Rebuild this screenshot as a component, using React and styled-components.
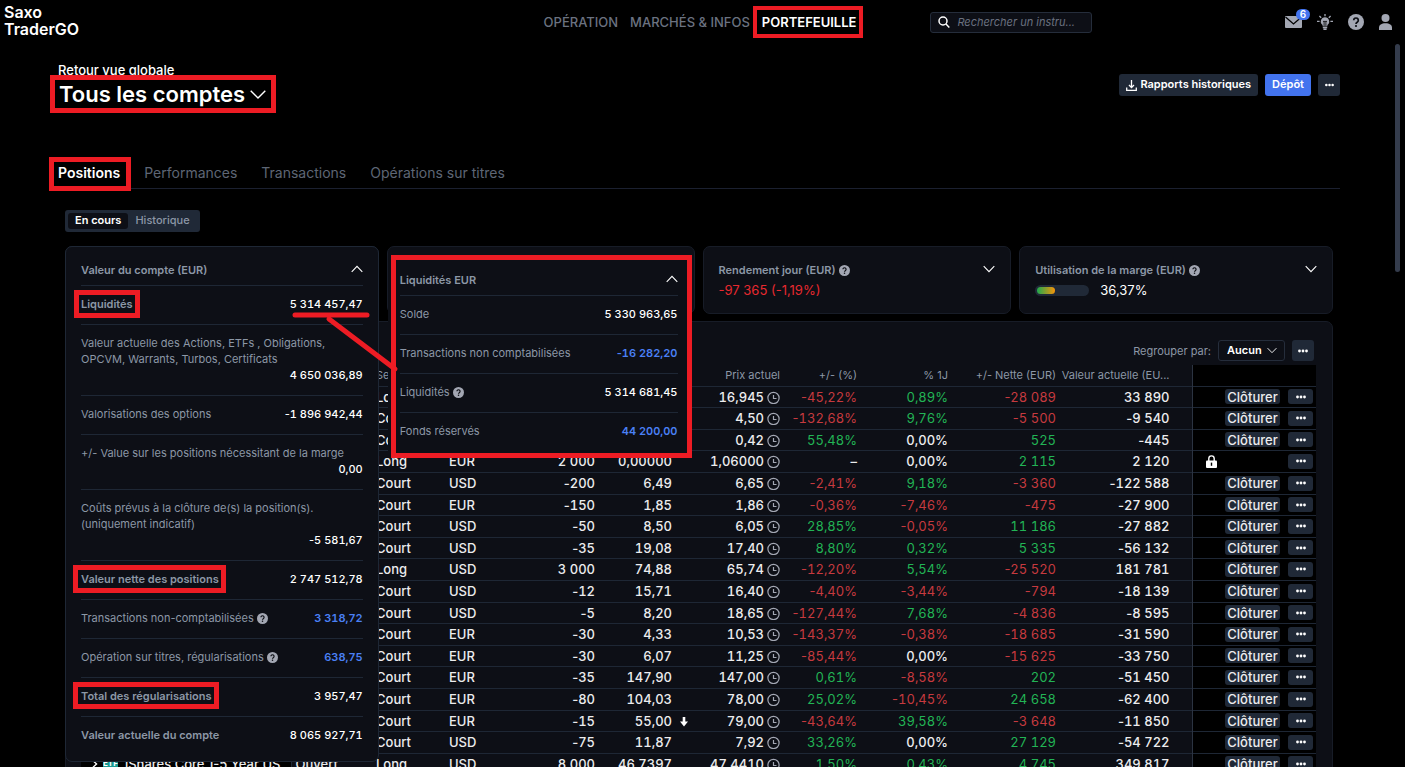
import React from "react";
import styled, { createGlobalStyle, css } from "styled-components";

const c = {
  bg: "#000000",
  card: "#0d0f16",
  line: "#1e2735",
  edge: "#171c27",
  chip: "#202937",
  text: "#ffffff",
  cell: "#ececee",
  muted: "#8c97a6",
  dim: "#5e6675",
  icon: "#a3a7b3",
  blue: "#4273ee",
  link: "#4a80f5",
  red: "#c63a3f",
  redBright: "#e8292f",
  green: "#22b455",
  mark: "#ed1c24",
};

const GlobalStyle = createGlobalStyle`
  *, *::before, *::after { box-sizing: border-box; }
  body {
    margin: 0;
    background: ${c.bg};
    color: ${c.text};
    font-family: Inter, "Liberation Sans", sans-serif;
    font-size: 12px;
    line-height: 16px;
  }
  button, input, select { font: inherit; color: inherit; }
  button { border: 0; padding: 0; background: none; cursor: pointer; }
  h1, h2, p { margin: 0; font-size: inherit; font-weight: inherit; }
  svg { display: block; flex: none; }
`;

const Page = styled.div`
  position: relative;
  height: 100vh;
  overflow: hidden;
`;

const outline = css`
  position: relative;
  &::after {
    content: "";
    position: absolute;
    inset: ${(p) => p.$inset};
    border: ${(p) => p.$thick || 5}px solid ${c.mark};
    pointer-events: none;
  }
`;

const Marked = styled.span`
  ${outline}
`;

const TopBar = styled.header`
  display: grid;
  grid-template-columns: 1fr auto 1fr;
  align-items: center;
  height: 44px;
  padding: 0 13px 0 4px;
`;

const Logo = styled.div`
  align-self: start;
  padding-top: 4px;
  font-size: 16px;
  line-height: 17px;
  font-weight: 600;
`;

const Nav = styled.nav`
  display: flex;
  gap: 12px;
  font-size: 13px;
  font-weight: 500;
  margin-left: 4px;
`;

const NavLink = styled.a`
  color: ${(p) => (p.$active ? c.text : "#6b7280")};
  font-weight: ${(p) => (p.$active ? 600 : 500)};
  text-decoration: none;
`;

const TopRight = styled.div`
  display: flex;
  justify-content: space-between;
  align-items: center;
  padding-left: 74px;
`;

const SearchBox = styled.label`
  display: flex;
  align-items: center;
  gap: 7px;
  width: 162px;
  height: 21px;
  padding: 0 7px 1px;
  border: 1px solid #252d3b;
  border-radius: 3px;
  background: ${c.card};
`;

const SearchInput = styled.input`
  flex: 1;
  min-width: 0;
  border: 0;
  padding: 0;
  outline: 0;
  background: none;
  font-size: 11px;
  font-style: italic;
  &::placeholder { color: #6b7280; opacity: 1; }
`;

const IconRow = styled.div`
  display: flex;
  align-items: center;
  gap: 15px;
  color: ${c.icon};
`;

const IconButton = styled.button`
  position: relative;
  color: inherit;
`;

const Badge = styled.span`
  position: absolute;
  left: 11px;
  top: -7px;
  width: 14px;
  height: 11px;
  border-radius: 6px;
  background: ${c.blue};
  color: #fff;
  font-size: 10px;
  font-weight: 600;
  line-height: 11px;
  text-align: center;
`;

const Main = styled.main`
  padding: 18px 65px 0 50px;
`;

const TitleRow = styled.div`
  display: flex;
  justify-content: space-between;
  align-items: flex-start;
  height: 94px;
`;

const TitleBlock = styled.div`
  padding-left: 8px;
`;

const BackLink = styled.a`
  display: block;
  font-size: 13px;
  font-weight: 500;
  color: ${c.text};
  text-decoration: none;
`;

const AccountButton = styled.button`
  ${outline}
  display: flex;
  align-items: center;
  gap: 4px;
  padding-left: 1px;
  font-size: 22px;
  line-height: 32px;
  font-weight: 600;
`;

const Actions = styled.div`
  display: flex;
  gap: 7px;
  padding-top: 12px;
`;

const Button = styled.button`
  display: flex;
  align-items: center;
  justify-content: center;
  gap: 3px;
  height: 22px;
  padding: 0 7px 2px;
  border-radius: 3px;
  background: ${(p) => (p.$primary ? c.blue : c.chip)};
  color: ${c.text};
  font-size: 11px;
  font-weight: 600;
`;

const Tabs = styled.div`
  display: flex;
  gap: 24px;
  height: 33px;
  padding-left: 8px;
  border-bottom: 1px solid #1b2030;
  font-size: 14px;
`;

const Tab = styled.button`
  align-self: flex-start;
  line-height: 34px;
  color: ${(p) => (p.$active ? c.text : c.dim)};
  font-weight: ${(p) => (p.$active ? 600 : 400)};
`;

const Content = styled.div`
  padding: 21px 7px 0 15px;
`;

const Segment = styled.div`
  display: inline-flex;
  height: 22px;
  padding: 3px;
  border-radius: 3px;
  background: ${c.chip};
`;

const SegmentButton = styled.button`
  height: 16px;
  padding: 0 7px 2px;
  border-radius: 3px;
  font-size: 11px;
  line-height: 14px;
  font-weight: ${(p) => (p.$active ? 600 : 500)};
  color: ${(p) => (p.$active ? c.text : c.muted)};
  background: ${(p) => (p.$active ? c.card : "none")};
`;

const Cards = styled.div`
  display: grid;
  grid-template-columns: 314fr 308fr 309fr 314fr;
  gap: 8px;
  margin-top: 14px;
`;

const Card = styled.section`
  position: relative;
  height: 68px;
  padding: 15px;
  border: 1px solid ${c.edge};
  border-radius: 7px;
  background: ${c.card};
`;

const CardHead = styled.div`
  display: flex;
  align-items: center;
  justify-content: space-between;
  color: ${c.muted};
  font-size: 11px;
  font-weight: 600;
`;

const CardTitle = styled.h2`
  display: flex;
  align-items: center;
  gap: 3px;
`;

const Toggle = styled.button`
  margin-top: -2px;
  color: ${c.text};
`;

const CardValue = styled.p`
  display: flex;
  align-items: center;
  gap: 11px;
  margin-top: 4px;
  font-size: 13px;
  color: ${(p) => (p.$down ? c.redBright : c.text)};
`;

const Meter = styled.span`
  width: 54px;
  height: 11px;
  padding: 2px;
  border-radius: 6px;
  background: ${c.chip};
  &::before {
    content: "";
    display: block;
    width: 18px;
    height: 7px;
    border-radius: 4px;
    background: linear-gradient(90deg, #1fa94f, #f5930a);
  }
`;

const OpenCard = styled(Card)`
  position: absolute;
  z-index: 2;
  left: -1px;
  right: -1px;
  top: -1px;
  height: auto;
  padding: 0 15px 6px;
  border-color: ${c.line};
`;

const CashBox = styled.section`
  position: absolute;
  z-index: 2;
  left: 3px;
  right: 2px;
  top: 8px;
  height: 203px;
  padding: 0 9px 0 4px;
  border: 5px solid ${c.mark};
  background: ${c.card};
  box-shadow: -3px 0 0 ${c.card};
`;

const ListHead = styled(CardHead)`
  height: ${(p) => p.$h}px;
  padding-top: ${(p) => p.$top}px;
`;

const Line = styled.div`
  display: flex;
  flex-wrap: wrap;
  justify-content: space-between;
  padding: 10px 0 12px;
  border-top: 1px solid ${c.line};
  font-size: 11px;
  color: ${c.muted};
`;

const LineLabel = styled.span`
  display: flex;
  align-items: center;
  gap: 3px;
  font-weight: ${(p) => (p.$strong ? 600 : 400)};
  width: ${(p) => (p.$full ? "100%" : "auto")};
`;

const LineValue = styled.span`
  margin-left: auto;
  font-variant-numeric: tabular-nums;
  font-weight: ${(p) => (p.$link ? 600 : 500)};
  color: ${(p) => (p.$link ? c.link : c.text)};
`;

const Callout = styled.svg`
  position: absolute;
  z-index: 3;
  left: 226px;
  top: 64px;
`;

const Panel = styled.section`
  margin-top: 7px;
  padding: 18px 16px 0 15px;
  border: 1px solid ${c.edge};
  border-radius: 7px 7px 0 0;
  background: ${c.card};
`;

const Toolbar = styled.div`
  display: flex;
  align-items: center;
  justify-content: flex-end;
  gap: 7px;
  padding-right: 2px;
  color: ${c.muted};
  font-size: 11px;
`;

const SelectWrap = styled.span`
  position: relative;
  color: ${c.text};
  svg { position: absolute; right: 8px; top: 7px; pointer-events: none; }
`;

const Select = styled.select`
  appearance: none;
  display: block;
  width: 67px;
  height: 21px;
  padding: 0 8px 1px;
  border: 1px solid #252d3b;
  border-radius: 3px;
  background: ${c.card};
  font-size: 11px;
  font-weight: 600;
`;

const MoreButton = styled(Button)`
  width: ${(p) => p.$w || 22}px;
  height: ${(p) => p.$h || 22}px;
  padding: 0;
`;

const Table = styled.table`
  width: 100%;
  margin-top: 4px;
  border-collapse: collapse;
  table-layout: fixed;
  white-space: nowrap;
`;

const Row = styled.tr`
  height: 22px;
  border-bottom: 1px solid ${c.line};
  &:nth-child(5n + 1), &:nth-child(5n + 3) { height: 21px; }
`;

const cell = css`
  padding: 0 4px;
  overflow: hidden;
  text-align: ${(p) => (p.$left ? "left" : "right")};
`;

const Th = styled.th`
  ${cell}
  height: 21px;
  font-size: 11px;
  font-weight: 400;
  color: ${c.muted};
`;

const ValueTh = styled(Th)`
  padding: 0 22px 0 0;
`;

const tones = { up: c.green, down: c.red, flat: c.cell };

const Td = styled.td`
  ${cell}
  font-size: 13px;
  font-variant-numeric: tabular-nums;
  font-weight: ${(p) => (p.$tone === "up" || p.$tone === "down" ? 400 : 500)};
  color: ${(p) => tones[p.$tone || "flat"]};
`;

const NameTd = styled(Td)`
  padding: 0 0 0 11px;
  border-right: 1px solid ${c.line};
  background: ${c.bg};
  font-variant-numeric: normal;
`;

const NameCell = styled.div`
  display: flex;
  align-items: center;
  gap: 5px;
`;

const EtfTag = styled.span`
  margin-right: 2px;
  background: #199a92;
  color: #fff;
  font-size: 8px;
  line-height: 13px;
  font-weight: 700;
`;

const Minus = styled.span`
  font-variant-numeric: normal;
`;

const ValueTd = styled(Td)`
  padding-right: 22px;
`;

const ActionTd = styled.td`
  padding: 0 3px 0 14px;
  border-left: 1px solid #2b3341;
  background: ${c.bg};
`;

const ActionTh = styled.th`
  padding: 0;
  border-left: 1px solid #2b3341;
  background: ${c.bg};
`;

const ActionCell = styled.div`
  display: flex;
  align-items: center;
  gap: 8px;
`;

const CloseButton = styled(Button)`
  width: 55px;
  height: 15px;
  padding: 0;
  margin-left: auto;
  color: ${c.cell};
  font-size: 13px;
  font-weight: 500;
`;

const LockSlot = styled.span`
  margin: 0 auto 0 -1px;
`;

const PriceCell = styled.div`
  display: flex;
  align-items: center;
  gap: 3px;
`;

const Price = styled.span`
  margin-left: auto;
`;

const ScrollThumb = styled.div`
  position: absolute;
  right: 5px;
  top: 44px;
  width: 5px;
  height: 228px;
  border-radius: 3px;
  background: #343c4c;
`;

const Chevron = ({ w = 12, up, sw = 1.1 }) => (
  <svg width={w} height={w / 2 + 2} viewBox="0 0 12 8" fill="none" stroke="currentColor" strokeWidth={sw} aria-hidden="true">
    <path d={up ? "M.7 6.8 6 1.4l5.3 5.4" : "M.7 1.2 6 6.6l5.3-5.4"} />
  </svg>
);

const Dots = ({ w = 10 }) => (
  <svg width={w} height="4" viewBox="0 0 10 4" fill="currentColor" aria-hidden="true">
    <circle cx="1.5" cy="2" r="1.4" /><circle cx="5" cy="2" r="1.4" /><circle cx="8.5" cy="2" r="1.4" />
  </svg>
);

const Help = ({ size = 11 }) => (
  <svg width={size} height={size} viewBox="0 0 16 16" aria-hidden="true">
    <circle cx="8" cy="8" r="8" fill={c.icon} />
    <path d="M5.7 6.3a2.3 2.3 0 1 1 3.5 2c-.8.5-1.2.8-1.2 1.6" fill="none" stroke="#0b0d13" strokeWidth="1.7" />
    <circle cx="8" cy="12" r="1.1" fill="#0b0d13" />
  </svg>
);

const Clock = () => (
  <svg width="13" height="14" viewBox="0 0 13 14" fill="none" stroke="#a3a7b3" aria-hidden="true">
    <circle cx="6.5" cy="8" r="5.6" strokeWidth="1.2" />
    <path d="M6.5 5v3.5h3" strokeWidth="1.2" />
  </svg>
);

const Lock = () => (
  <svg width="11" height="13" viewBox="0 0 11 13" aria-hidden="true">
    <path d="M2.8 6V3.6a2.7 2.7 0 0 1 5.4 0V6" fill="none" stroke="#fff" strokeWidth="1.4" />
    <rect y="5.4" width="11" height="7.6" rx="1" fill="#fff" />
    <path d="M5.5 7.6v3.2" stroke="#000" strokeWidth="1.4" />
  </svg>
);

const DownArrow = () => (
  <svg width="8" height="12" viewBox="0 0 8 12" fill="#fff" aria-hidden="true">
    <path d="M2.7 2h2.6v4.6H8L4 11.4 0 6.6h2.7z" />
  </svg>
);

const Num = ({ v }) => (v.startsWith("-") ? <><Minus>-</Minus>{v.slice(1)}</> : v);

const rows = [
  ["Long", "", "", "", "16,945", "-45,22%", "0,89%", "-28 089", "33 890"],
  ["Court", "", "", "", "4,50", "-132,68%", "9,76%", "-5 500", "-9 540"],
  ["Court", "", "", "", "0,42", "55,48%", "0,00%", "525", "-445"],
  ["Long", "EUR", "2 000", "0,00000", "1,06000", "–", "0,00%", "2 115", "2 120"],
  ["Court", "USD", "-200", "6,49", "6,65", "-2,41%", "9,18%", "-3 360", "-122 588"],
  ["Court", "EUR", "-150", "1,85", "1,86", "-0,36%", "-7,46%", "-475", "-27 900"],
  ["Court", "USD", "-50", "8,50", "6,05", "28,85%", "-0,05%", "11 186", "-27 882"],
  ["Court", "USD", "-35", "19,08", "17,40", "8,80%", "0,32%", "5 335", "-56 132"],
  ["Long", "USD", "3 000", "74,88", "65,74", "-12,20%", "5,54%", "-25 520", "181 781"],
  ["Court", "USD", "-12", "15,71", "16,40", "-4,40%", "-3,44%", "-794", "-18 139"],
  ["Court", "USD", "-5", "8,20", "18,65", "-127,44%", "7,68%", "-4 836", "-8 595"],
  ["Court", "EUR", "-30", "4,33", "10,53", "-143,37%", "-0,38%", "-18 685", "-31 590"],
  ["Court", "EUR", "-30", "6,07", "11,25", "-85,44%", "0,00%", "-15 625", "-33 750"],
  ["Court", "EUR", "-35", "147,90", "147,00", "0,61%", "-8,58%", "202", "-51 450"],
  ["Court", "EUR", "-80", "104,03", "78,00", "25,02%", "-10,45%", "24 658", "-62 400"],
  ["Court", "EUR", "-15", "55,00", "79,00", "-43,64%", "39,58%", "-3 648", "-11 850"],
  ["Court", "USD", "-75", "11,87", "7,92", "33,26%", "0,00%", "27 129", "-54 722"],
  ["Long", "USD", "8 000", "46,7397", "47,4410", "1,50%", "0,43%", "4 745", "349 817"],
];

const tone = (v) => (v === "–" || v === "0,00%" ? "flat" : v.startsWith("-") ? "down" : "up");

const widths = [null, 81, 73, 81, 73, 77, 108, 77, 91, 108, 132, 124];

const accountLines = [
  { label: "Liquidités", value: "5 314 457,47", strong: true, mark: "-6px -7px -6px -7px" },
  { label: <>Valeur actuelle des Actions, ETFs , Obligations,<br />OPCVM, Warrants, Turbos, Certificats</>, value: "4 650 036,89", full: true },
  { label: "Valorisations des options", value: "-1 896 942,44" },
  { label: "+/- Value sur les positions nécessitant de la marge", value: "0,00", full: true },
  { label: <>Coûts prévus à la clôture de(s) la position(s).<br />(uniquement indicatif)</>, value: "-5 581,67", full: true },
  { label: "Valeur nette des positions", value: "2 747 512,78", strong: true, mark: "-6px -7px -6px -8px" },
  { label: "Transactions non-comptabilisées", value: "3 318,72", help: true, link: true },
  { label: "Opération sur titres, régularisations", value: "638,75", help: true, link: true },
  { label: "Total des régularisations", value: "3 957,47", strong: true, mark: "-6px -7px -5px -8px" },
  { label: "Valeur actuelle du compte", value: "8 065 927,71", strong: true },
];

const cashLines = [
  { label: "Solde", value: "5 330 963,65" },
  { label: "Transactions non comptabilisées", value: "-16 282,20", link: true },
  { label: "Liquidités", value: "5 314 681,45", help: true },
  { label: "Fonds réservés", value: "44 200,00", link: true },
];

const Lines = ({ items }) =>
  items.map((l, i) => (
    <Line key={i}>
      <LineLabel $strong={l.strong} $full={l.full}>
        {l.mark ? <Marked $inset={l.mark}>{l.label}</Marked> : <span>{l.label}</span>}
        {l.help && <Help />}
      </LineLabel>
      <LineValue $link={l.link}><Num v={l.value} /></LineValue>
    </Line>
  ));

export default function App() {
  return (
    <Page>
      <GlobalStyle />
      <TopBar>
        <Logo>Saxo<br />TraderGO</Logo>
        <Nav>
          <NavLink href="#operation">OPÉRATION</NavLink>
          <NavLink href="#marches">MARCHÉS &amp; INFOS</NavLink>
          <NavLink href="#portefeuille" $active>
            <Marked $inset="-8px -7px -8px -9px" $thick={4}>PORTEFEUILLE</Marked>
          </NavLink>
        </Nav>
        <TopRight>
          <SearchBox>
            <svg width="12" height="12" viewBox="0 0 12 12" fill="none" stroke="#fff" strokeWidth="1.5" aria-hidden="true">
              <circle cx="5" cy="5" r="4" /><path d="m8 8 3.3 3.5" />
            </svg>
            <SearchInput placeholder="Rechercher un instru..." aria-label="Rechercher" />
          </SearchBox>
          <IconRow>
            <IconButton aria-label="Messages">
              <svg width="17" height="12" viewBox="0 0 17 12" aria-hidden="true">
                <rect width="17" height="12" rx="1" fill="currentColor" />
                <path d="M.5 1 8.5 8l8-7" fill="none" stroke="#000" strokeWidth="1.3" />
              </svg>
              <Badge>6</Badge>
            </IconButton>
            <IconButton aria-label="Idées">
              <svg width="16" height="16" viewBox="0 0 16 16" fill="none" stroke="currentColor" aria-hidden="true">
                <path d="M8 0v2.2M2.4 2l1.8 1.8M13.6 2l-1.8 1.8M0 7.4h2.6M16 7.4h-2.6" strokeWidth="1.3" />
                <path d="M8 3.3a4.3 4.3 0 0 0-2.4 7.8v1.2h4.8v-1.2A4.3 4.3 0 0 0 8 3.3z" fill="currentColor" stroke="none" />
                <path d="M6 7.4h4M7.1 7.6v4.4M8.9 7.6v4.4" stroke="#000" strokeWidth=".8" />
                <path d="M5.8 13.5h4.4M6.4 15.3h3.2" strokeWidth="1.4" />
              </svg>
            </IconButton>
            <IconButton aria-label="Aide"><Help size={16} /></IconButton>
            <IconButton aria-label="Profil">
              <svg width="13" height="16" viewBox="0 0 13 16" fill="currentColor" aria-hidden="true">
                <circle cx="6.5" cy="4" r="4" /><path d="M0 16v-2.2C0 11 2.5 9.3 6.5 9.3S13 11 13 13.8V16z" />
              </svg>
            </IconButton>
          </IconRow>
        </TopRight>
      </TopBar>

      <Main>
        <TitleRow>
          <TitleBlock>
            <BackLink href="#global">Retour vue globale</BackLink>
            <AccountButton $inset="-3px -9px -3px -8px">
              <h1>Tous les comptes</h1>
              <Chevron w={18} sw={1} />
            </AccountButton>
          </TitleBlock>
          <Actions>
            <Button>
              <svg width="11" height="13" viewBox="0 0 11 13" fill="none" stroke="#fff" strokeWidth="1.3" aria-hidden="true">
                <path d="M5.5 2v7.4M3 7l2.5 2.6L8 7M.7 9.6v2.7h9.6V9.6" />
              </svg>
              Rapports historiques
            </Button>
            <Button $primary>Dépôt</Button>
            <MoreButton aria-label="Plus"><Dots w={9} /></MoreButton>
          </Actions>
        </TitleRow>

        <Tabs role="tablist">
          <Tab role="tab" aria-selected="true" $active>
            <Marked $inset="-7px -11px -10px -9px">Positions</Marked>
          </Tab>
          <Tab role="tab">Performances</Tab>
          <Tab role="tab">Transactions</Tab>
          <Tab role="tab">Opérations sur titres</Tab>
        </Tabs>

        <Content>
          <Segment>
            <SegmentButton $active>En cours</SegmentButton>
            <SegmentButton>Historique</SegmentButton>
          </Segment>

          <Cards>
            <Card>
              <OpenCard as="div">
                <ListHead $h={38} $top={8}>
                  <CardTitle>Valeur du compte (EUR)</CardTitle>
                  <Toggle aria-label="Réduire"><Chevron up /></Toggle>
                </ListHead>
                <Lines items={accountLines} />
              </OpenCard>
              <Callout width="108" height="66" viewBox="0 0 108 66" fill="none" stroke={c.mark} strokeLinecap="round" aria-hidden="true">
                <path d="M3 4h72" strokeWidth="5" />
                <path d="M37 8l66 50" strokeWidth="5" />
              </Callout>
            </Card>
            <Card>
              <CashBox>
                <ListHead $h={35} $top={4}>
                  <CardTitle>Liquidités EUR</CardTitle>
                  <Toggle aria-label="Réduire"><Chevron up /></Toggle>
                </ListHead>
                <Lines items={cashLines} />
              </CashBox>
            </Card>
            <Card>
              <CardHead>
                <CardTitle>Rendement jour (EUR) <Help /></CardTitle>
                <Toggle aria-label="Développer"><Chevron /></Toggle>
              </CardHead>
              <CardValue $down>-97 365 (-1,19%)</CardValue>
            </Card>
            <Card>
              <CardHead>
                <CardTitle>Utilisation de la marge (EUR) <Help /></CardTitle>
                <Toggle aria-label="Développer"><Chevron /></Toggle>
              </CardHead>
              <CardValue><Meter />36,37%</CardValue>
            </Card>
          </Cards>

          <Panel>
            <Toolbar>
              <label htmlFor="group">Regrouper par:</label>
              <SelectWrap>
                <Select id="group"><option>Aucun</option></Select>
                <Chevron w={10} />
              </SelectWrap>
              <MoreButton $h={21} aria-label="Plus"><Dots /></MoreButton>
            </Toolbar>
            <Table>
              <colgroup>
                {widths.map((w, i) => <col key={i} width={w || undefined} />)}
              </colgroup>
              <thead>
                <Row>
                  <Th /><Th />
                  <Th $left>Sens</Th>
                  <Th /><Th /><Th />
                  <Th>Prix actuel</Th>
                  <Th>+/- (%)</Th>
                  <Th>% 1J</Th>
                  <Th>+/- Nette (EUR)</Th>
                  <ValueTh>Valeur actuelle (EU...</ValueTh>
                  <ActionTh />
                </Row>
              </thead>
              <tbody>
                {rows.map((r, i) => (
                  <Row key={i}>
                    {i === 17 ? (
                      <>
                        <NameTd $left>
                          <NameCell>
                            <svg width="6" height="8" viewBox="0 0 6 8" fill="none" stroke="#fff" strokeWidth="1.3" aria-hidden="true"><path d="M1 .7 4.6 4 1 7.3" /></svg>
                            <EtfTag>ETF</EtfTag>
                            iShares Core 1-5 Year US...
                          </NameCell>
                        </NameTd>
                        <Td $left>Ouvert</Td>
                      </>
                    ) : (
                      <><NameTd /><Td /></>
                    )}
                    <Td $left>{r[0]}</Td>
                    <Td $left>{r[1]}</Td>
                    <Td><Num v={r[2]} /></Td>
                    <Td>{r[3]}</Td>
                    <Td>
                      <PriceCell>
                        {i === 15 && <DownArrow />}
                        <Price>{r[4]}</Price>
                        <Clock />
                      </PriceCell>
                    </Td>
                    <Td $tone={tone(r[5])}><Num v={r[5]} /></Td>
                    <Td $tone={tone(r[6])}><Num v={r[6]} /></Td>
                    <Td $tone={tone(r[7])}><Num v={r[7]} /></Td>
                    <ValueTd><Num v={r[8]} /></ValueTd>
                    <ActionTd>
                      <ActionCell>
                        {i === 3 ? <LockSlot><Lock /></LockSlot> : <CloseButton>Clôturer</CloseButton>}
                        <MoreButton $w={25} $h={15} aria-label="Plus"><Dots /></MoreButton>
                      </ActionCell>
                    </ActionTd>
                  </Row>
                ))}
              </tbody>
            </Table>
          </Panel>
        </Content>
      </Main>
      <ScrollThumb />
    </Page>
  );
}
